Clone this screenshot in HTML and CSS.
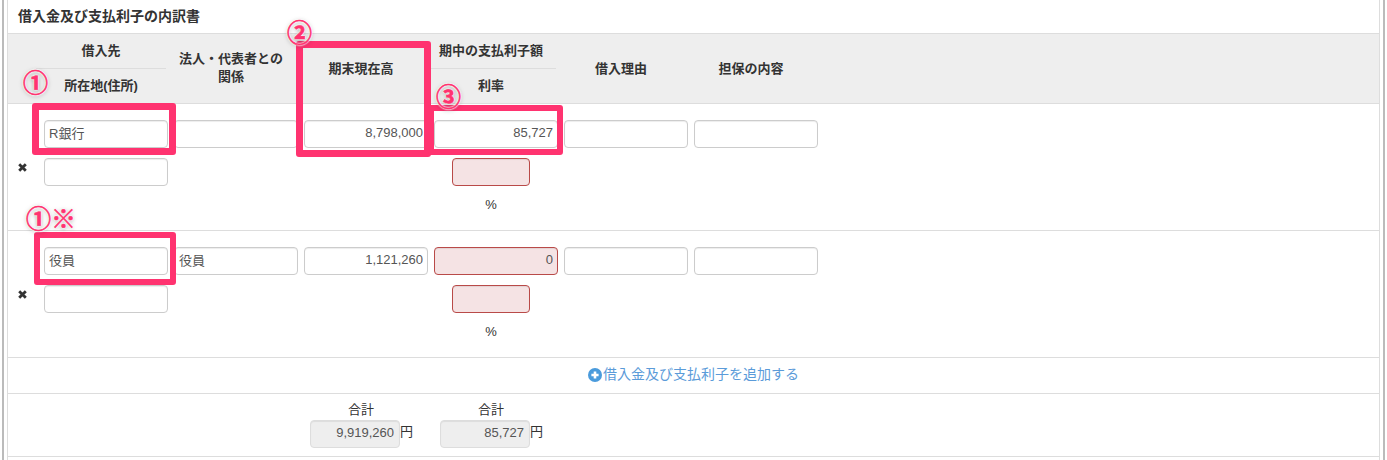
FILE: index.html
```html
<!DOCTYPE html>
<html lang="ja">
<head>
    <meta charset="UTF-8">
    <title>借入金及び支払利子の内訳書</title>
    <link rel="stylesheet" href="styles.css">
</head>
<body>
    <div class="frame">
        <div class="panel">
            <div class="title">借入金及び支払利子の内訳書</div>

            <div class="head">
                <div></div>
                <div class="head-cell split"><span>借入先</span><span>所在地(住所)</span></div>
                <div class="head-cell two-line">法人・代表者との<br>関係</div>
                <div class="head-cell">期末現在高</div>
                <div class="head-cell split"><span>期中の支払利子額</span><span>利率</span></div>
                <div class="head-cell">借入理由</div>
                <div class="head-cell">担保の内容</div>
            </div>

            <div class="row">
                <div></div>
                <div class="cell"><input class="field" value="R銀行"></div>
                <div class="cell"><input class="field"></div>
                <div class="cell"><input class="field num" value="8,798,000"></div>
                <div class="cell"><input class="field num" value="85,727"></div>
                <div class="cell"><input class="field"></div>
                <div class="cell"><input class="field"></div>

                <div class="remove">
                    <svg width="9" height="9" viewBox="0 0 9 9"><path d="M1.2 1.2L7.8 7.8M7.8 1.2L1.2 7.8" stroke="#333" stroke-width="2.8"/></svg>
                </div>
                <div class="cell"><input class="field"></div>
                <div class="cell rate"><input class="field small error"></div>
                <div class="cell rate pct">%</div>
            </div>

            <div class="row">
                <div></div>
                <div class="cell"><input class="field" value="役員"></div>
                <div class="cell"><input class="field" value="役員"></div>
                <div class="cell"><input class="field num" value="1,121,260"></div>
                <div class="cell"><input class="field num error" value="0"></div>
                <div class="cell"><input class="field"></div>
                <div class="cell"><input class="field"></div>

                <div class="remove">
                    <svg width="9" height="9" viewBox="0 0 9 9"><path d="M1.2 1.2L7.8 7.8M7.8 1.2L1.2 7.8" stroke="#333" stroke-width="2.8"/></svg>
                </div>
                <div class="cell"><input class="field"></div>
                <div class="cell rate"><input class="field small error"></div>
                <div class="cell rate pct">%</div>
            </div>

            <div class="add">
                <svg width="14" height="14" viewBox="0 0 14 14"><circle cx="7" cy="7" r="7" fill="#4a9bdc"/><path d="M7 3.4V10.6M3.4 7H10.6" stroke="#fff" stroke-width="2.6"/></svg>
                <a class="add-link">借入金及び支払利子を追加する</a>
            </div>

            <div class="total">
                <div class="total-cell first">
                    <div class="total-label">合計</div>
                    <div class="total-line"><input class="field sum" value="9,919,260"><span class="yen">円</span></div>
                </div>
                <div class="total-cell">
                    <div class="total-label">合計</div>
                    <div class="total-line"><input class="field sum" value="85,727"><span class="yen">円</span></div>
                </div>
            </div>
        </div>

        <!-- Markierungen über dem Formular -->
        <div class="mark mark1"></div>
        <div class="mark mark2"></div>
        <div class="mark mark3"></div>
        <div class="mark mark4"></div>
        <span class="badge badge1">①</span>
        <span class="badge badge2">②</span>
        <span class="badge badge3">③</span>
        <span class="badge badge4">①※</span>
    </div>
</body>
</html>
```

FILE: styles.css
```css
body {
    margin: 0;
    background-color: #fff;
    font-family: "Liberation Sans", "Noto Sans CJK JP", sans-serif;
    font-size: 13px;
    color: #333;
}

.frame {
    position: relative;
    box-sizing: border-box;
    height: 460px;
    width: 1383px;
    margin-left: 2px;
    padding: 0 3px;
    border-left: 2px solid #bbb;
    border-right: 2px solid #bbb;
    overflow: hidden;
}

.panel {
    height: 460px;
    border-left: 1px solid #ddd;
    border-right: 1px solid #ddd;
}

.title {
    height: 33px;
    line-height: 32px;
    padding-left: 10px;
    font-size: 14px;
    font-weight: bold;
}

.head {
    display: grid;
    grid-template-columns: 28px repeat(6, 130px);
    height: 69px;
    background-color: #eee;
    border-top: 1px solid #ddd;
    border-bottom: 1px solid #ddd;
}

.head-cell {
    display: flex;
    align-items: center;
    justify-content: center;
    text-align: center;
    font-weight: bold;
    line-height: 18px;
}

.head-cell.two-line {
    padding-bottom: 2px;
}

.head-cell.split {
    flex-direction: column;
    align-items: stretch;
}

.head-cell.split span {
    flex: 1;
    display: flex;
    align-items: center;
    justify-content: center;
}

.head-cell.split span:first-child {
    border-bottom: 1px solid #ddd;
}

.row {
    display: grid;
    grid-template-columns: 28px repeat(6, 130px);
    grid-auto-rows: 28px;
    row-gap: 10px;
    height: 110px;
    padding-top: 16px;
    border-bottom: 1px solid #ddd;
}

.cell {
    padding-left: 8px;
}

.cell.rate {
    grid-column: 5;
    padding-left: 0;
    display: flex;
    justify-content: center;
}

.cell.pct {
    grid-row: 3;
    height: 18px;
    line-height: 18px;
}

.remove {
    grid-column: 1;
    display: flex;
    align-items: center;
    padding-left: 10px;
    padding-bottom: 10px;
}

.field {
    display: block;
    box-sizing: border-box;
    width: 124px;
    height: 28px;
    padding: 0 4px 3px;
    background-color: #fff;
    border: 1px solid #ccc;
    border-radius: 4px;
    box-shadow: inset 0 1px 1px rgba(0, 0, 0, 0.075);
    font-family: inherit;
    font-size: 13px;
    color: #555;
}

.field.num {
    text-align: right;
}

.field.small {
    width: 78px;
}

.field.error {
    background-color: #f5e3e4;
    border-color: #b94a48;
}

.field.sum {
    width: 90px;
    padding-right: 5px;
    text-align: right;
    background-color: #eee;
    border-color: #ddd;
}

.add {
    display: flex;
    align-items: center;
    justify-content: center;
    gap: 1px;
    box-sizing: border-box;
    height: 36px;
    padding-bottom: 1px;
    border-bottom: 1px solid #ddd;
}

.add-link {
    font-size: 14px;
    line-height: 18px;
    margin-bottom: 3px;
    color: #5b9bd9;
}

.total {
    display: flex;
    height: 62px;
    border-bottom: 1px solid #ddd;
}

.total-cell {
    width: 130px;
    padding-top: 7px;
    text-align: center;
}

.total-cell.first {
    margin-left: 288px;
}

.total-label {
    height: 19px;
    line-height: 18px;
}

.total-line {
    display: flex;
    justify-content: center;
}

.yen {
    width: 12px;
    line-height: 24px;
}

.mark {
    position: absolute;
    box-sizing: border-box;
    border: 7px solid #ff3370;
    border-radius: 3px;
}

.mark1 {
    left: 28px;
    top: 103px;
    width: 144px;
    height: 52px;
}

.mark2 {
    left: 292px;
    top: 41px;
    width: 135px;
    height: 116px;
}

.mark3 {
    left: 424px;
    top: 105px;
    width: 135px;
    height: 50px;
    border-width: 6px;
}

.mark4 {
    left: 30px;
    top: 232px;
    width: 142px;
    height: 53px;
    border-width: 6px;
}

.badge {
    position: absolute;
    font-family: "Noto Sans CJK JP", sans-serif;
    font-size: 25px;
    font-weight: bold;
    line-height: 28px;
    color: #ff3370;
    -webkit-text-stroke: 0.6px #ff3370;
    text-shadow: 0 0 2px #fff, 0 0 2px #fff, 0 0 2px #fff, 0 0 2px #fff, 0 1px 4px rgba(0, 0, 0, 0.5);
}

.badge1 {
    left: 19px;
    top: 67px;
}

.badge2 {
    left: 283px;
    top: 17px;
}

.badge3 {
    left: 432px;
    top: 81px;
}

.badge4 {
    left: 22px;
    top: 203px;
}
```
